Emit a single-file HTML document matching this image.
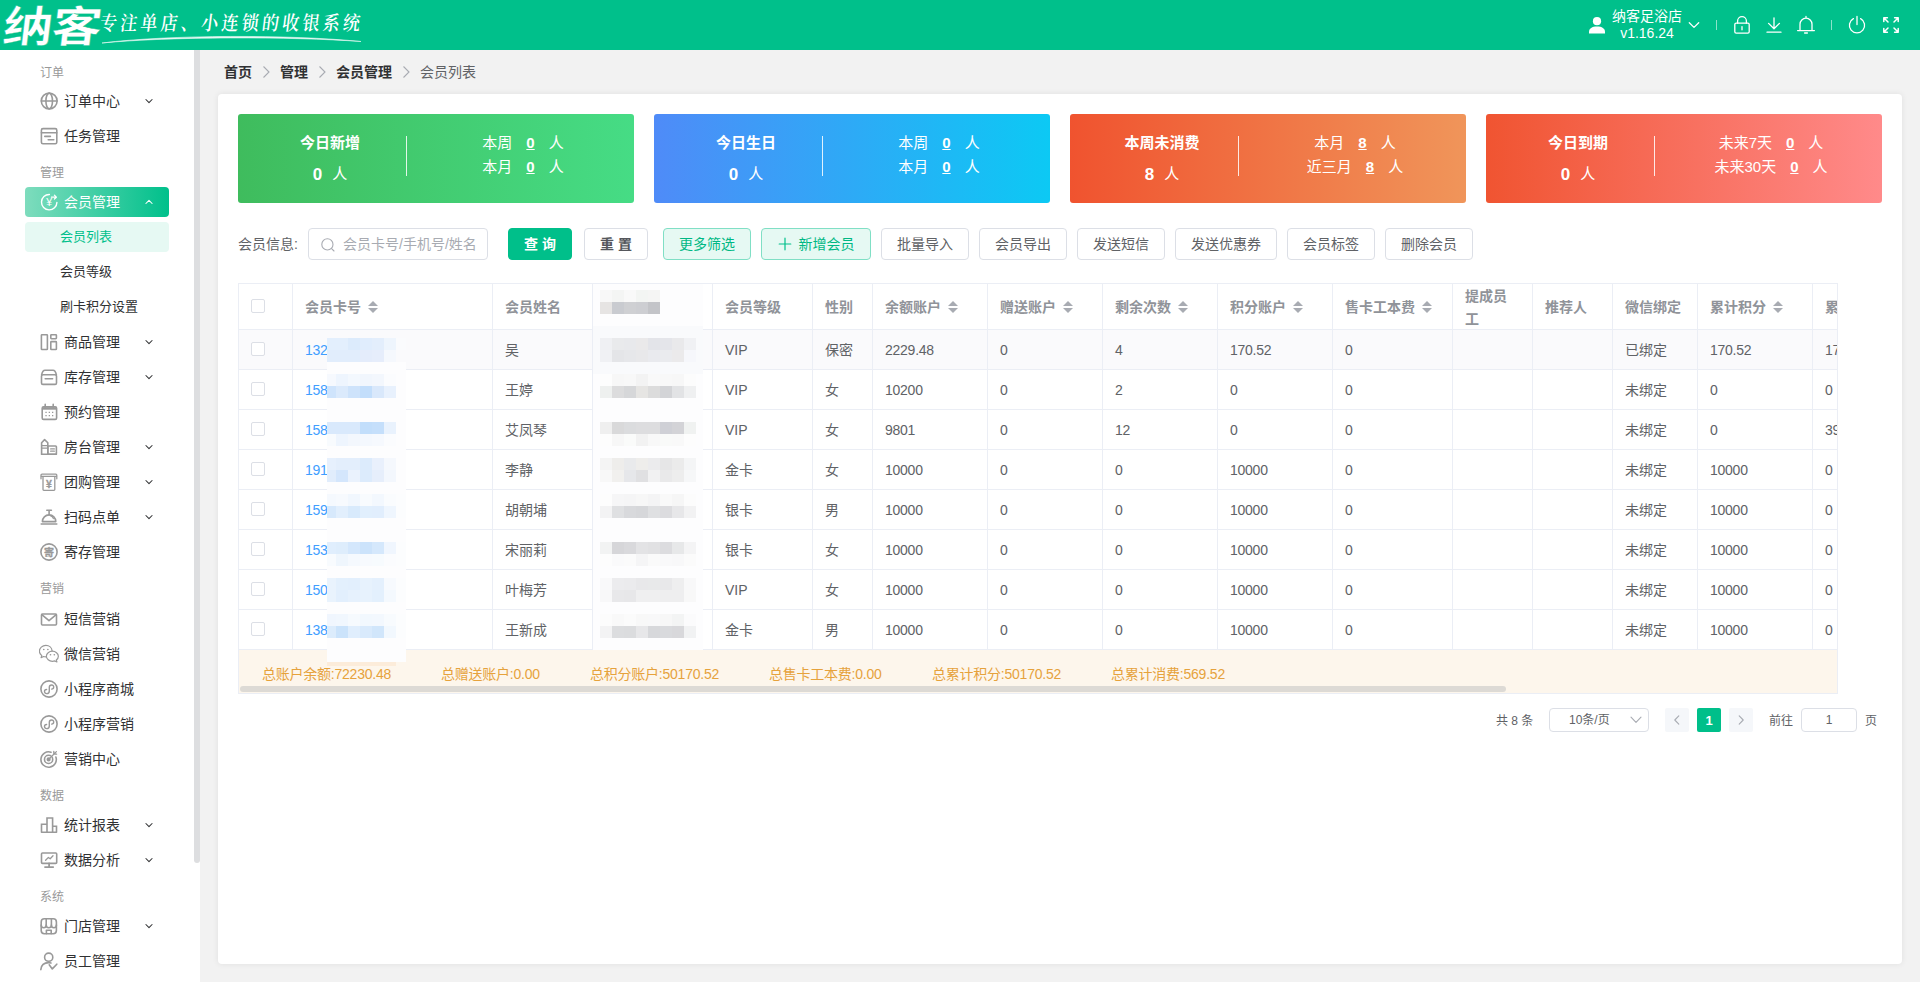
<!DOCTYPE html>
<html lang="zh-CN">
<head>
<meta charset="utf-8">
<title>会员列表</title>
<style>
*{box-sizing:border-box;margin:0;padding:0}
html,body{width:1920px;height:982px;overflow:hidden;background:#f2f2f2}
body{font-family:"Liberation Sans","Noto Sans CJK SC",sans-serif;font-size:14px;color:#303133;position:relative}
.abs{position:absolute}
/* header */
#hd{position:absolute;left:0;top:0;width:1920px;height:50px;background:#00c08b;color:#fff}
#logo{position:absolute;left:0px;top:-1px;font-size:43px;font-weight:700;font-family:"Liberation Sans","Noto Sans CJK SC",sans-serif;letter-spacing:-1px;line-height:56px;transform:scaleX(1.16) skewX(-6deg);transform-origin:left bottom;white-space:nowrap;-webkit-text-stroke:.4px #00c08b}
#slogan{position:absolute;left:100px;top:11.5px;font-size:17px;line-height:24px;font-family:"Liberation Serif","Noto Serif CJK SC",serif;font-weight:600;letter-spacing:3.25px;white-space:nowrap;transform:scaleY(1.16) skewX(-8deg);transform-origin:left center}
svg.hi{fill:none;stroke:#fff;stroke-width:1.3;stroke-linecap:round;stroke-linejoin:round}
/* sidebar */
#sb{position:absolute;left:0;top:50px;width:200px;height:932px;background:#fff;overflow:hidden}
#sb .thumb{position:absolute;left:194px;top:0;width:6px;height:813px;background:#dddee0;border-radius:0 0 3px 3px}
#sb .track{display:none}
.gl{position:absolute;left:40px;font-size:12px;color:#999;line-height:16px;height:16px;margin-top:1px}
.mi{position:absolute;left:25px;width:144px;height:30px;line-height:30px;font-size:14px;color:#303133;border-radius:4px;white-space:nowrap}
.mi .tx{position:absolute;left:39px;top:0}
.mi svg.ic{position:absolute;left:14px;top:5px;width:20px;height:20px;fill:none;stroke:#999;stroke-width:1.6;stroke-linecap:round;stroke-linejoin:round}
.mi svg.ch{position:absolute;left:119px;top:10px;width:10px;height:10px;fill:none;stroke:#303133;stroke-width:1.05;stroke-linecap:round;stroke-linejoin:round}
.mi.act{background:linear-gradient(90deg,#7edcbd 0%,#00c08b 100%);color:#fff}
.mi.act svg.ic,.mi.act svg.ch{stroke:#fff}
.sm{position:absolute;left:25px;width:144px;height:30px;line-height:30px;font-size:13px;color:#303133;border-radius:4px;padding-left:35px;white-space:nowrap}
.sm.on{background:#e6f9f3;color:#00c08b}
/* main */
#bc{position:absolute;left:224px;top:62px;height:20px;line-height:20px;font-size:14px;white-space:nowrap}
#bc b{font-weight:700;color:#303133}
#bc span.l{color:#606266}
#bc svg{display:inline-block;vertical-align:-2px;margin:0 8px 0 8px;width:12px;height:14px;fill:none;stroke:#a8abb2;stroke-width:1.1}
#card{position:absolute;left:218px;top:94px;width:1684px;height:870px;background:#fff;border-radius:4px;box-shadow:0 0 6px rgba(0,0,0,.08)}

/* stat cards */
.st{position:absolute;top:20px;width:396px;height:88.75px;border-radius:3px;color:#fff;font-size:15px}
.g1{background:linear-gradient(90deg,#3fbc5d 0%,#46dc85 100%)}
.g2{background:linear-gradient(90deg,#4f8bf8 0%,#0cc9f4 100%)}
.g3{background:linear-gradient(90deg,#f0532f 0%,#f0955a 100%)}
.g4{background:linear-gradient(90deg,#f05431 0%,#ff8a8a 100%)}
.st .sl{position:absolute;left:0;top:0;width:184px;text-align:center}
.st .t{position:absolute;left:0;width:184px;top:18px;line-height:22px;font-weight:700;font-size:15px}
.st .n{position:absolute;left:0;width:184px;top:48px;line-height:24px;font-size:15px;white-space:nowrap}
.st .n b{font-size:17px;font-weight:700;margin-right:10px;vertical-align:-0.5px}
.st .dv{position:absolute;left:168px;top:22px;width:1px;height:40px;background:rgba(255,255,255,.85)}
.st .srs{position:absolute;left:135px;width:300px;top:17px;text-align:center}
.st .sr{line-height:24px;height:24px;white-space:nowrap}
.st .sr u{font-weight:700;margin:0 14px;text-decoration:underline;text-underline-offset:1px}
/* filter */
.flabel{position:absolute;left:20px;top:134px;height:32px;line-height:32px;font-size:14px;color:#606266;white-space:nowrap}
.finput{position:absolute;left:90px;top:134px;width:180px;height:32px;border:1px solid #dcdfe6;border-radius:4px;background:#fff;line-height:30px;font-size:14px;color:#a8abb2;white-space:nowrap}
.finput svg{position:absolute;left:11px;top:8px;width:16px;height:16px;fill:none;stroke:#a8abb2;stroke-width:1.1;stroke-linecap:round}
.finput span{position:absolute;left:34px;top:0}
.btn{position:absolute;top:134px;height:32px;line-height:30px;border:1px solid #dcdfe6;border-radius:4px;background:#fff;text-align:center;font-size:14px;color:#606266;white-space:nowrap}
.btn.b{font-weight:700;color:#55575c}
.btn.pri{background:#00bf8a;border-color:#00bf8a;color:#fff;font-weight:700}
.btn.pl{background:#e6f9f3;border-color:#80dfc5;color:#00b884}
.btn svg{display:inline-block;width:14px;height:14px;vertical-align:-2px;margin-right:7px;fill:none;stroke:#00c08b;stroke-width:1.2;stroke-linecap:round}
/* table */
#tb{position:absolute;left:20px;top:189px;width:1600px;height:411px;overflow:hidden;border-top:1px solid #ebeef5;border-left:1px solid #ebeef5;border-bottom:1px solid #ebeef5;border-right:1px solid #ebeef5}
#tb table{position:absolute;left:-1px;top:-1px;border-collapse:separate;border-spacing:0;table-layout:fixed;width:1690px}
#tb th,#tb td{border-right:1px solid #ebeef5;border-bottom:1px solid #ebeef5;padding:0;text-align:left;vertical-align:middle;font-size:14px;overflow:hidden}
#tb th{height:47px;border-top:1px solid #ebeef5;color:#909399;font-weight:700;background:#fff}
#tb td{height:40px;color:#606266;background:#fff}
#tb tr.hov td{background:#fafafc}
#tb .cell{padding:0 12px;line-height:23px;white-space:normal;word-break:break-all}
#tb td .cell{white-space:nowrap;position:relative;top:1px}
#tb th .cell{margin:-1px 0;position:relative;top:1px}
#tb .lk{color:#409eff}
#tb .nm{letter-spacing:-.25px}
#tb .c0{padding-left:13px}
.cb{display:inline-block;width:14px;height:14px;border:1px solid #dcdfe6;border-radius:2px;background:#fff;vertical-align:middle;position:relative;top:-2px}
.so{display:inline-block;position:relative;width:24px;height:14px;vertical-align:middle;top:0}
.so i{position:absolute;left:7px;width:0;height:0;border:5px solid transparent}
.so .up{border-bottom-color:#a8abb2;top:-5px}
.so .dn{border-top-color:#a8abb2;bottom:-3px}
#ft{position:absolute;left:-1px;top:366px;width:1601px;height:43px;background:#fdf6ec;color:#e6a23c;font-size:14px}
#ft span{position:absolute;top:14px;line-height:20px;white-space:nowrap;letter-spacing:-.23px}
#ft .hs{position:absolute;left:2px;top:36px;width:1266px;height:6px;border-radius:3px;background:#dddad5}
/* pagination */
.pg{position:absolute;top:614px;height:24px;line-height:27px;font-size:12px;color:#606266;white-space:nowrap}
.pgsel{position:absolute;left:1331px;top:614px;width:100px;height:24px;border:1px solid #dcdfe6;border-radius:4px;font-size:12px;color:#606266;line-height:22px}
.pgsel span{position:absolute;left:19px;top:0}
.pgsel svg{position:absolute;left:80px;top:7px;width:12px;height:8px;fill:none;stroke:#a8abb2;stroke-width:1.1;stroke-linecap:round;stroke-linejoin:round}
svg.mz{z-index:3}
.pgb{position:absolute;top:614px;width:24px;height:24px;border-radius:2px;background:#f5f7fa;text-align:center;line-height:24px;font-size:13px}
.pgb svg{width:10px;height:12px;fill:none;stroke:#a8abb2;stroke-width:1.1;stroke-linecap:round;stroke-linejoin:round;margin-top:6px}
.pgb.on{background:#00bf8a;color:#fff;font-weight:700;line-height:26px}
.pgin{position:absolute;left:1583px;top:614px;width:56px;height:24px;border:1px solid #dcdfe6;border-radius:4px;text-align:center;line-height:22px;font-size:12px;color:#606266}
</style>
</head>
<body>
<div id="hd">
  <div id="logo">纳客</div>
  <div id="slogan">专注单店、小连锁的收银系统</div>
  <svg class="abs" style="left:100px;top:33px" width="264" height="12" viewBox="0 0 264 12"><path d="M2 10 C70 1.5 190 1.5 261 8.5 C190 3.5 70 3.5 2 10Z" fill="#fff" stroke="#fff" stroke-width=".6" opacity=".9"/></svg>
  <svg class="abs" style="left:1588px;top:16px" width="18" height="18" viewBox="0 0 18 18"><circle cx="9" cy="5.2" r="4.1" fill="#fff"/><path d="M1 17.6 V16 C1 12.6 4 10.6 9 10.6 C14 10.6 17 12.6 17 16 V17.6 Z" fill="#fff"/></svg>
  <div class="abs" style="left:1597px;top:7px;width:100px;text-align:center;font-size:14px;line-height:18px;white-space:nowrap">纳客足浴店</div>
  <div class="abs" style="left:1597px;top:24px;width:100px;text-align:center;font-size:14px;line-height:18px;white-space:nowrap">v1.16.24</div>
  <svg class="abs hi" style="left:1688px;top:20px" width="12" height="10" viewBox="0 0 12 10"><path d="M1.3 2.8 L6 7.4 L10.7 2.8"/></svg>
  <div class="abs" style="left:1716px;top:20px;width:1px;height:10px;background:rgba(255,255,255,.55)"></div>
  <svg class="abs hi" style="left:1732px;top:15px" width="20" height="20" viewBox="0 0 20 20"><rect x="2.8" y="8.2" width="14.4" height="10" rx="1.4"/><path d="M5.6 8.2 V6 a4.4 4.4 0 0 1 8.8 0 V8.2 M10 11.6 V14.8" /></svg>
  <svg class="abs hi" style="left:1764px;top:15px" width="20" height="20" viewBox="0 0 20 20"><path d="M10 2.8 V13.4 M4.6 8.4 L10 13.8 L15.4 8.4 M3 17.2 H17"/></svg>
  <svg class="abs hi" style="left:1796px;top:15px" width="20" height="20" viewBox="0 0 20 20"><path d="M4 15.6 V9.2 a6 6 0 0 1 12 0 V15.6 M1.6 15.6 H18.4 M10 3.2 V1.4 M8.6 18 H11.4"/></svg>
  <div class="abs" style="left:1831px;top:20px;width:1px;height:10px;background:rgba(255,255,255,.55)"></div>
  <svg class="abs hi" style="left:1847px;top:15px" width="20" height="20" viewBox="0 0 20 20"><path d="M10 1.4 V9.6 M6.4 3.6 A7.6 7.6 0 1 0 13.6 3.6"/></svg>
  <svg class="abs hi" style="left:1881px;top:15px" width="20" height="20" viewBox="0 0 20 20"><path d="M2.8 6.4 V2.8 H6.4 M3 3 L7 7 M13.6 2.8 H17.2 V6.4 M17 3 L13 7 M2.8 13.6 V17.2 H6.4 M3 17 L7 13 M17.2 13.6 V17.2 H13.6 M17 17 L13 13" stroke-width="1.5"/></svg>
</div>
<div id="sb">
  <div class="track"></div><div class="thumb"></div>
  <!--SB0-->
  <div class="gl" style="top:14px">订单</div>
  <div class="mi" style="top:36px"><svg class="ic" viewBox="0 0 20 20"><circle cx="10.2" cy="10" r="7.9"/><ellipse cx="10.2" cy="10" rx="3.3" ry="7.9"/><path d="M2.3 10 H18.1"/></svg><span class="tx">订单中心</span><svg class="ch" viewBox="0 0 10 10"><path d="M1.9 3.5 L5 6.6 L8.1 3.5"/></svg></div>
  <div class="mi" style="top:71px"><svg class="ic" viewBox="0 0 20 20"><rect x="2.4" y="2.6" width="15.4" height="15.2" rx="1.6"/><path d="M2.4 6.8 H17.8 M5.8 10.4 H11.4 M9.2 13.8 H14.8"/></svg><span class="tx">任务管理</span></div>
  <div class="gl" style="top:114px">管理</div>
  <div class="mi act" style="top:137px"><svg class="ic" viewBox="0 0 20 20"><path d="M10.4 2.5 A7.7 7.7 0 1 0 17.9 10.4" stroke-width="1.4"/><path d="M12.4 5.2 H17.2 M15.4 3.2 L17.4 5.2 L15.4 7" stroke-width="1.2"/><text x="10.1" y="14" font-size="10.5" text-anchor="middle" stroke="none" fill="#fff" font-family="Liberation Sans,sans-serif">¥</text></svg><span class="tx">会员管理</span><svg class="ch" viewBox="0 0 10 10"><path d="M1.9 6.5 L5 3.4 L8.1 6.5"/></svg></div>
  <div class="sm on" style="top:172px">会员列表</div>
  <div class="sm" style="top:207px">会员等级</div>
  <div class="sm" style="top:242px">刷卡积分设置</div>
  <div class="mi" style="top:277px"><svg class="ic" viewBox="0 0 20 20"><rect x="2.4" y="2.7" width="6" height="14.8" rx=".6"/><rect x="11.8" y="2.7" width="5.6" height="4" rx=".6"/><rect x="11.8" y="9.6" width="5.6" height="7.9" rx=".6"/></svg><span class="tx">商品管理</span><svg class="ch" viewBox="0 0 10 10"><path d="M1.9 3.5 L5 6.6 L8.1 3.5"/></svg></div>
  <div class="mi" style="top:312px"><svg class="ic" viewBox="0 0 20 20"><path d="M2.6 8 C3.2 5 4.4 3.2 6 3.2 H14 C15.6 3.2 16.8 5 17.4 8"/><rect x="2.5" y="7.8" width="15" height="9.6" rx="1.4"/><path d="M6.2 11.8 H13.6"/></svg><span class="tx">库存管理</span><svg class="ch" viewBox="0 0 10 10"><path d="M1.9 3.5 L5 6.6 L8.1 3.5"/></svg></div>
  <div class="mi" style="top:347px"><svg class="ic" viewBox="0 0 20 20"><rect x="3.2" y="4.8" width="14.4" height="12.6" rx="1.4"/><path d="M6.2 2.4 V5 M14.2 2.4 V5"/><path d="M3.4 6.4 H17.4" stroke-width="2.6" stroke-linecap="butt"/><path d="M6.4 9.8 h1.3 v1.3 h-1.3z M9.7 9.8 h1.3 v1.3 h-1.3z M13 9.8 h1.3 v1.3 h-1.3z M6.4 13 h1.3 v1.3 h-1.3z M9.7 13 h1.3 v1.3 h-1.3z M13 13 h1.3 v1.3 h-1.3z" fill="#999" stroke="none"/></svg><span class="tx">预约管理</span></div>
  <div class="mi" style="top:382px"><svg class="ic" viewBox="0 0 20 20"><path d="M2.6 17.2 V5.8 L5.6 2.6 L8.8 5.8 V17.2"/><path d="M2.6 8.6 H8.8 M2.6 11.2 H8.8" stroke-width="1.2"/><rect x="8.8" y="9" width="8.6" height="8.2" rx=".8"/><path d="M2.6 17.2 H17.4"/><path d="M11.6 11.9 H15.4 M11.6 14.2 H15.4" stroke-width="1.2"/></svg><span class="tx">房台管理</span><svg class="ch" viewBox="0 0 10 10"><path d="M1.9 3.5 L5 6.6 L8.1 3.5"/></svg></div>
  <div class="mi" style="top:417px"><svg class="ic" viewBox="0 0 20 20"><path d="M2 6.8 V3.2 a1 1 0 0 1 1-1 H16.8 a1 1 0 0 1 1 1 V6.8" stroke-width="1.3"/><path d="M2.4 4.4 H17.4" stroke-width="1.3"/><path d="M4 4.6 V17.6 a.8 .8 0 0 0 .8 .8 H15 a.8 .8 0 0 0 .8-.8 V4.6" stroke-width="1.3"/><text x="9.9" y="15.6" font-size="10.5" font-weight="700" text-anchor="middle" stroke="#999" stroke-width=".3" fill="#999" font-family="Liberation Sans,sans-serif">¥</text></svg><span class="tx">团购管理</span><svg class="ch" viewBox="0 0 10 10"><path d="M1.9 3.5 L5 6.6 L8.1 3.5"/></svg></div>
  <div class="mi" style="top:452px"><svg class="ic" viewBox="0 0 20 20"><path d="M3.4 14.6 a6.7 6.7 0 0 1 13.4 0 Z"/><path d="M2.2 17 H17.8 M10.1 7.8 V3.6 M7.8 3.2 H12.4"/><path d="M11.4 8.6 a4.6 4.6 0 0 1 3 3" stroke-width="1.2"/></svg><span class="tx">扫码点单</span><svg class="ch" viewBox="0 0 10 10"><path d="M1.9 3.5 L5 6.6 L8.1 3.5"/></svg></div>
  <div class="mi" style="top:487px"><svg class="ic" viewBox="0 0 20 20"><circle cx="10" cy="10" r="8.1"/><text x="10" y="13.7" font-size="10" font-weight="700" text-anchor="middle" stroke="#999" stroke-width=".35" fill="#999" font-family="Liberation Sans,Noto Sans CJK SC,sans-serif">寄</text></svg><span class="tx">寄存管理</span></div>
  <div class="gl" style="top:530px">营销</div>
  <div class="mi" style="top:554px"><svg class="ic" viewBox="0 0 20 20"><rect x="2.5" y="5" width="15" height="11" rx="1"/><path d="M2.8 5.6 L10 11.6 L17.2 5.6"/></svg><span class="tx">短信营销</span></div>
  <div class="mi" style="top:589px"><svg class="ic" viewBox="0 0 20 20"><g transform="translate(10 9.6) scale(1.2) translate(-10 -9.8)" stroke-width="1"><path d="M12.6 7.6 C12.4 5 10.2 3 7.4 3 C4.4 3 2 5.1 2 7.8 C2 9.3 2.8 10.6 4 11.5 L3.4 13.2 L5.5 12.2 C6.1 12.4 6.7 12.5 7.4 12.5"/><path d="M12.8 7.8 C15.4 7.8 17.8 9.7 17.8 12 C17.8 13.3 17.1 14.4 16.1 15.2 L16.6 16.8 L14.8 15.9 C14.2 16.1 13.5 16.2 12.8 16.2 C10.2 16.2 7.8 14.3 7.8 12 C7.8 9.7 10.2 7.8 12.8 7.8 Z"/><path d="M5.6 6.4 h.1 M9 6.4 h.1 M11.2 10.8 h.1 M14.4 10.8 h.1" stroke-width="1.3"/></g></svg><span class="tx">微信营销</span></div>
  <div class="mi" style="top:624px"><svg class="ic" viewBox="0 0 20 20"><circle cx="10" cy="10" r="8.1"/><path d="M12.6 10.1 C13.9 10.1 14.7 9.2 14.7 8.1 C14.7 6.9 13.8 6 12.6 6 C11.3 6 10.3 6.9 10.3 8.3 V11.9 C10.3 13.3 9.2 14.6 7.6 14.6 C6.4 14.6 5.5 13.7 5.5 12.5 C5.5 11.4 6.3 10.5 7.6 10.5" stroke-width="1.4"/></svg><span class="tx">小程序商城</span></div>
  <div class="mi" style="top:659px"><svg class="ic" viewBox="0 0 20 20"><circle cx="10" cy="10" r="8.1"/><path d="M12.6 10.1 C13.9 10.1 14.7 9.2 14.7 8.1 C14.7 6.9 13.8 6 12.6 6 C11.3 6 10.3 6.9 10.3 8.3 V11.9 C10.3 13.3 9.2 14.6 7.6 14.6 C6.4 14.6 5.5 13.7 5.5 12.5 C5.5 11.4 6.3 10.5 7.6 10.5" stroke-width="1.4"/></svg><span class="tx">小程序营销</span></div>
  <div class="mi" style="top:694px"><svg class="ic" viewBox="0 0 20 20"><path d="M16.9 8 A7.7 7.7 0 1 1 12 3.2"/><circle cx="9.6" cy="10.4" r="4.1"/><circle cx="9.6" cy="10.4" r="1.3" fill="#999"/><path d="M9.8 10.2 L17.4 2.6 M14.8 2.4 V5.2 H17.6" stroke-width="1.3"/></svg><span class="tx">营销中心</span></div>
  <div class="gl" style="top:737px">数据</div>
  <div class="mi" style="top:760px"><svg class="ic" viewBox="0 0 20 20"><path d="M2.5 17.3 V9.2 H8 M8 17.3 V3 H13.6 V17.3 M13.6 11.2 H17.5 V17.3 M2.5 17.3 H17.5" stroke-linejoin="miter"/></svg><span class="tx">统计报表</span><svg class="ch" viewBox="0 0 10 10"><path d="M1.9 3.5 L5 6.6 L8.1 3.5"/></svg></div>
  <div class="mi" style="top:795px"><svg class="ic" viewBox="0 0 20 20"><rect x="2.5" y="3" width="15.2" height="10.4" rx="1"/><path d="M10.1 13.4 V17 M6 17.1 H14.2" stroke-width="1.8"/><path d="M6.6 10.2 L9.4 7.4 L11.2 8.8 L14 5.8" stroke-width="1.3"/></svg><span class="tx">数据分析</span><svg class="ch" viewBox="0 0 10 10"><path d="M1.9 3.5 L5 6.6 L8.1 3.5"/></svg></div>
  <div class="gl" style="top:838px">系统</div>
  <div class="mi" style="top:861px"><svg class="ic" viewBox="0 0 20 20"><rect x="2.2" y="2.7" width="15.2" height="15" rx="3.2"/><path d="M7.2 2.7 V9.2 M12.4 2.7 V9.2"/><path d="M2.2 9 a2.5 2.8 0 0 0 5 0 a2.6 2.8 0 0 0 5.2 0 a2.5 2.8 0 0 0 5 0"/><path d="M7.4 17.6 V14.2 H12.2 V17.6"/></svg><span class="tx">门店管理</span><svg class="ch" viewBox="0 0 10 10"><path d="M1.9 3.5 L5 6.6 L8.1 3.5"/></svg></div>
  <div class="mi" style="top:896px"><svg class="ic" viewBox="0 0 20 20"><circle cx="9.7" cy="6.2" r="4.1"/><path d="M1.8 18.6 C2.2 14.6 5 11.6 9.7 11.6 C10.6 11.6 11.4 11.7 12 11.9 M10.2 13.8 L13.3 17.9 L17.8 13.2"/></svg><span class="tx">员工管理</span></div>
  <!--SB1-->
</div>
<div id="bc"><b>首页</b><svg viewBox="0 0 12 14"><path d="M3.5 1.5 L9 7 L3.5 12.5"/></svg><b>管理</b><svg viewBox="0 0 12 14"><path d="M3.5 1.5 L9 7 L3.5 12.5"/></svg><b>会员管理</b><svg viewBox="0 0 12 14"><path d="M3.5 1.5 L9 7 L3.5 12.5"/></svg><span class="l">会员列表</span></div>
<div id="card">
  <!--C0-->
  <div class="st g1" style="left:20px"><div class="sl"><div class="t">今日新增</div><div class="n"><b>0</b>人</div></div><i class="dv"></i><div class="srs"><div class="sr">本周<u>0</u>人</div><div class="sr">本月<u>0</u>人</div></div></div>
  <div class="st g2" style="left:436px"><div class="sl"><div class="t">今日生日</div><div class="n"><b>0</b>人</div></div><i class="dv"></i><div class="srs"><div class="sr">本周<u>0</u>人</div><div class="sr">本月<u>0</u>人</div></div></div>
  <div class="st g3" style="left:852px"><div class="sl"><div class="t">本周未消费</div><div class="n"><b>8</b>人</div></div><i class="dv"></i><div class="srs"><div class="sr">本月<u>8</u>人</div><div class="sr">近三月<u>8</u>人</div></div></div>
  <div class="st g4" style="left:1268px"><div class="sl"><div class="t">今日到期</div><div class="n"><b>0</b>人</div></div><i class="dv"></i><div class="srs"><div class="sr">未来7天<u>0</u>人</div><div class="sr">未来30天<u>0</u>人</div></div></div>
  <div class="flabel">会员信息:</div>
  <div class="finput"><svg viewBox="0 0 16 16"><circle cx="7.4" cy="7.4" r="5.6"/><path d="M11.6 11.6 L14 14"/></svg><span>会员卡号/手机号/姓名</span></div>
  <div class="btn pri" style="left:290px;width:64px">查 询</div>
  <div class="btn def b" style="left:366px;width:64px">重 置</div>
  <div class="btn pl" style="left:445px;width:88px">更多筛选</div>
  <div class="btn pl" style="left:543px;width:110px"><svg viewBox="0 0 14 14"><path d="M7 1.2 V12.8 M1.2 7 H12.8"/></svg>新增会员</div>
  <div class="btn def" style="left:663px;width:88px">批量导入</div>
  <div class="btn def" style="left:761px;width:88px">会员导出</div>
  <div class="btn def" style="left:859px;width:88px">发送短信</div>
  <div class="btn def" style="left:957px;width:102px">发送优惠券</div>
  <div class="btn def" style="left:1069px;width:88px">会员标签</div>
  <div class="btn def" style="left:1167px;width:88px">删除会员</div>
  <div id="tb"><table><colgroup><col style="width:55px"><col style="width:200px"><col style="width:100px"><col style="width:120px"><col style="width:100px"><col style="width:60px"><col style="width:115px"><col style="width:115px"><col style="width:115px"><col style="width:115px"><col style="width:120px"><col style="width:80px"><col style="width:80px"><col style="width:85px"><col style="width:115px"><col style="width:115px"></colgroup><thead><tr><th class="c0"><span class="cb"></span></th><th><div class="cell">会员卡号<span class="so"><i class="up"></i><i class="dn"></i></span></div></th><th><div class="cell">会员姓名</div></th><th><div class="cell"></div></th><th><div class="cell">会员等级</div></th><th><div class="cell">性别</div></th><th><div class="cell">余额账户<span class="so"><i class="up"></i><i class="dn"></i></span></div></th><th><div class="cell">赠送账户<span class="so"><i class="up"></i><i class="dn"></i></span></div></th><th><div class="cell">剩余次数<span class="so"><i class="up"></i><i class="dn"></i></span></div></th><th><div class="cell">积分账户<span class="so"><i class="up"></i><i class="dn"></i></span></div></th><th><div class="cell">售卡工本费<span class="so"><i class="up"></i><i class="dn"></i></span></div></th><th><div class="cell">提成员工</div></th><th><div class="cell">推荐人</div></th><th><div class="cell">微信绑定</div></th><th><div class="cell">累计积分<span class="so"><i class="up"></i><i class="dn"></i></span></div></th><th><div class="cell">累计消费<span class="so"><i class="up"></i><i class="dn"></i></span></div></th></tr></thead><tbody><tr class="hov"><td class="c0"><span class="cb"></span></td><td><div class="cell lk nm">132</div></td><td><div class="cell">吴</div></td><td></td><td><div class="cell">VIP</div></td><td><div class="cell">保密</div></td><td><div class="cell nm">2229.48</div></td><td><div class="cell nm">0</div></td><td><div class="cell nm">4</div></td><td><div class="cell nm">170.52</div></td><td><div class="cell nm">0</div></td><td><div class="cell"></div></td><td><div class="cell"></div></td><td><div class="cell">已绑定</div></td><td><div class="cell nm">170.52</div></td><td><div class="cell nm">17</div></td></tr><tr><td class="c0"><span class="cb"></span></td><td><div class="cell lk nm">158</div></td><td><div class="cell">王婷</div></td><td></td><td><div class="cell">VIP</div></td><td><div class="cell">女</div></td><td><div class="cell nm">10200</div></td><td><div class="cell nm">0</div></td><td><div class="cell nm">2</div></td><td><div class="cell nm">0</div></td><td><div class="cell nm">0</div></td><td><div class="cell"></div></td><td><div class="cell"></div></td><td><div class="cell">未绑定</div></td><td><div class="cell nm">0</div></td><td><div class="cell nm">0</div></td></tr><tr><td class="c0"><span class="cb"></span></td><td><div class="cell lk nm">158</div></td><td><div class="cell">艾凤琴</div></td><td></td><td><div class="cell">VIP</div></td><td><div class="cell">女</div></td><td><div class="cell nm">9801</div></td><td><div class="cell nm">0</div></td><td><div class="cell nm">12</div></td><td><div class="cell nm">0</div></td><td><div class="cell nm">0</div></td><td><div class="cell"></div></td><td><div class="cell"></div></td><td><div class="cell">未绑定</div></td><td><div class="cell nm">0</div></td><td><div class="cell nm">39</div></td></tr><tr><td class="c0"><span class="cb"></span></td><td><div class="cell lk nm">191</div></td><td><div class="cell">李静</div></td><td></td><td><div class="cell">金卡</div></td><td><div class="cell">女</div></td><td><div class="cell nm">10000</div></td><td><div class="cell nm">0</div></td><td><div class="cell nm">0</div></td><td><div class="cell nm">10000</div></td><td><div class="cell nm">0</div></td><td><div class="cell"></div></td><td><div class="cell"></div></td><td><div class="cell">未绑定</div></td><td><div class="cell nm">10000</div></td><td><div class="cell nm">0</div></td></tr><tr><td class="c0"><span class="cb"></span></td><td><div class="cell lk nm">159</div></td><td><div class="cell">胡朝埔</div></td><td></td><td><div class="cell">银卡</div></td><td><div class="cell">男</div></td><td><div class="cell nm">10000</div></td><td><div class="cell nm">0</div></td><td><div class="cell nm">0</div></td><td><div class="cell nm">10000</div></td><td><div class="cell nm">0</div></td><td><div class="cell"></div></td><td><div class="cell"></div></td><td><div class="cell">未绑定</div></td><td><div class="cell nm">10000</div></td><td><div class="cell nm">0</div></td></tr><tr><td class="c0"><span class="cb"></span></td><td><div class="cell lk nm">153</div></td><td><div class="cell">宋丽莉</div></td><td></td><td><div class="cell">银卡</div></td><td><div class="cell">女</div></td><td><div class="cell nm">10000</div></td><td><div class="cell nm">0</div></td><td><div class="cell nm">0</div></td><td><div class="cell nm">10000</div></td><td><div class="cell nm">0</div></td><td><div class="cell"></div></td><td><div class="cell"></div></td><td><div class="cell">未绑定</div></td><td><div class="cell nm">10000</div></td><td><div class="cell nm">0</div></td></tr><tr><td class="c0"><span class="cb"></span></td><td><div class="cell lk nm">150</div></td><td><div class="cell">叶梅芳</div></td><td></td><td><div class="cell">VIP</div></td><td><div class="cell">女</div></td><td><div class="cell nm">10000</div></td><td><div class="cell nm">0</div></td><td><div class="cell nm">0</div></td><td><div class="cell nm">10000</div></td><td><div class="cell nm">0</div></td><td><div class="cell"></div></td><td><div class="cell"></div></td><td><div class="cell">未绑定</div></td><td><div class="cell nm">10000</div></td><td><div class="cell nm">0</div></td></tr><tr><td class="c0"><span class="cb"></span></td><td><div class="cell lk nm">138</div></td><td><div class="cell">王新成</div></td><td></td><td><div class="cell">金卡</div></td><td><div class="cell">男</div></td><td><div class="cell nm">10000</div></td><td><div class="cell nm">0</div></td><td><div class="cell nm">0</div></td><td><div class="cell nm">10000</div></td><td><div class="cell nm">0</div></td><td><div class="cell"></div></td><td><div class="cell"></div></td><td><div class="cell">未绑定</div></td><td><div class="cell nm">10000</div></td><td><div class="cell nm">0</div></td></tr></tbody></table><!--M0--><svg class="mz" width="1600" height="408" viewBox="0 0 1600 408" shape-rendering="crispEdges" style="position:absolute;left:-1px;top:0;overflow:visible"><rect x="89" y="54" width="79" height="324" fill="#fdfdfe"/><rect x="355" y="-6" width="110" height="372" fill="#fdfdfe"/><rect x="355" y="42" width="110" height="48" fill="#f9fafc"/><rect x="89" y="54" width="9" height="12" fill="#e3effd"/><rect x="98" y="54" width="12" height="12" fill="#e3effd"/><rect x="110" y="54" width="12" height="12" fill="#dcebfc"/><rect x="122" y="54" width="12" height="12" fill="#e0edfd"/><rect x="134" y="54" width="12" height="12" fill="#e3eefc"/><rect x="146" y="54" width="12" height="12" fill="#eef5fd"/><rect x="158" y="54" width="10" height="12" fill="#fafbfd"/><rect x="89" y="66" width="9" height="12" fill="#e1edfc"/><rect x="98" y="66" width="12" height="12" fill="#e1edfc"/><rect x="110" y="66" width="12" height="12" fill="#e1edfc"/><rect x="122" y="66" width="12" height="12" fill="#e4ecfb"/><rect x="134" y="66" width="12" height="12" fill="#e6edfb"/><rect x="146" y="66" width="12" height="12" fill="#f5f8fd"/><rect x="158" y="66" width="10" height="12" fill="#fafafc"/><rect x="89" y="90" width="9" height="12" fill="#f6f9fe"/><rect x="98" y="90" width="12" height="12" fill="#eef5fe"/><rect x="110" y="90" width="12" height="12" fill="#f3f8fe"/><rect x="122" y="90" width="12" height="12" fill="#f1f6fd"/><rect x="134" y="90" width="12" height="12" fill="#f3f7fd"/><rect x="146" y="90" width="12" height="12" fill="#fbfcfe"/><rect x="158" y="90" width="10" height="12" fill="#fdfdfe"/><rect x="89" y="102" width="9" height="12" fill="#cfe4fc"/><rect x="98" y="102" width="12" height="12" fill="#dbeafc"/><rect x="110" y="102" width="12" height="12" fill="#cee3fb"/><rect x="122" y="102" width="12" height="12" fill="#c3defb"/><rect x="134" y="102" width="12" height="12" fill="#d9e8fb"/><rect x="146" y="102" width="12" height="12" fill="#e8f1fd"/><rect x="158" y="102" width="10" height="12" fill="#fdfdfe"/><rect x="89" y="138" width="9" height="12" fill="#d9e9fc"/><rect x="98" y="138" width="12" height="12" fill="#d9e9fc"/><rect x="110" y="138" width="12" height="12" fill="#d9e9fc"/><rect x="122" y="138" width="12" height="12" fill="#c2defb"/><rect x="134" y="138" width="12" height="12" fill="#c5dffb"/><rect x="146" y="138" width="12" height="12" fill="#e9f2fd"/><rect x="158" y="138" width="10" height="12" fill="#fdfdfe"/><rect x="89" y="150" width="9" height="12" fill="#f8fbfe"/><rect x="98" y="150" width="12" height="12" fill="#eef5fe"/><rect x="110" y="150" width="12" height="12" fill="#f3f7fd"/><rect x="122" y="150" width="12" height="12" fill="#f4f8fe"/><rect x="134" y="150" width="12" height="12" fill="#f6f9fe"/><rect x="146" y="150" width="12" height="12" fill="#fbfcfe"/><rect x="158" y="150" width="10" height="12" fill="#fdfdfe"/><rect x="89" y="174" width="9" height="12" fill="#e6f0fd"/><rect x="98" y="174" width="12" height="12" fill="#e3eefc"/><rect x="110" y="174" width="12" height="12" fill="#e3eefc"/><rect x="122" y="174" width="12" height="12" fill="#dcebfc"/><rect x="134" y="174" width="12" height="12" fill="#e9f0fc"/><rect x="146" y="174" width="12" height="12" fill="#f5f8fd"/><rect x="158" y="174" width="10" height="12" fill="#fdfdfe"/><rect x="89" y="186" width="9" height="12" fill="#e1edfc"/><rect x="98" y="186" width="12" height="12" fill="#d4e6fc"/><rect x="110" y="186" width="12" height="12" fill="#eaf2fd"/><rect x="122" y="186" width="12" height="12" fill="#dcebfc"/><rect x="134" y="186" width="12" height="12" fill="#e6eefb"/><rect x="146" y="186" width="12" height="12" fill="#f3f7fd"/><rect x="158" y="186" width="10" height="12" fill="#fdfdfe"/><rect x="89" y="210" width="9" height="12" fill="#f5f9fe"/><rect x="98" y="210" width="12" height="12" fill="#f7fafe"/><rect x="110" y="210" width="12" height="12" fill="#f1f7fe"/><rect x="122" y="210" width="12" height="12" fill="#f8fbfe"/><rect x="134" y="210" width="12" height="12" fill="#f3f8fe"/><rect x="146" y="210" width="12" height="12" fill="#fafcfe"/><rect x="158" y="210" width="10" height="12" fill="#fcfdfe"/><rect x="89" y="222" width="9" height="12" fill="#d7e9fc"/><rect x="98" y="222" width="12" height="12" fill="#e2effd"/><rect x="110" y="222" width="12" height="12" fill="#d8eafc"/><rect x="122" y="222" width="12" height="12" fill="#e1effd"/><rect x="134" y="222" width="12" height="12" fill="#e1eefd"/><rect x="146" y="222" width="12" height="12" fill="#eff6fe"/><rect x="158" y="222" width="10" height="12" fill="#fcfdfe"/><rect x="89" y="258" width="9" height="12" fill="#e0eefd"/><rect x="98" y="258" width="12" height="12" fill="#deedfc"/><rect x="110" y="258" width="12" height="12" fill="#d4e7fc"/><rect x="122" y="258" width="12" height="12" fill="#cce3fb"/><rect x="134" y="258" width="12" height="12" fill="#d5e8fc"/><rect x="146" y="258" width="12" height="12" fill="#f0f6fe"/><rect x="158" y="258" width="10" height="12" fill="#fcfdfe"/><rect x="89" y="270" width="9" height="12" fill="#f8fbfe"/><rect x="98" y="270" width="12" height="12" fill="#eff6fd"/><rect x="110" y="270" width="12" height="12" fill="#f5f9fe"/><rect x="122" y="270" width="12" height="12" fill="#f7fafe"/><rect x="134" y="270" width="12" height="12" fill="#f7fbfe"/><rect x="146" y="270" width="12" height="12" fill="#fbfcfe"/><rect x="158" y="270" width="10" height="12" fill="#fcfdfe"/><rect x="89" y="294" width="9" height="12" fill="#e9f3fd"/><rect x="98" y="294" width="12" height="12" fill="#e3f0fd"/><rect x="110" y="294" width="12" height="12" fill="#e2effd"/><rect x="122" y="294" width="12" height="12" fill="#e7f2fd"/><rect x="134" y="294" width="12" height="12" fill="#e4f0fd"/><rect x="146" y="294" width="12" height="12" fill="#f7fafe"/><rect x="158" y="294" width="10" height="12" fill="#fcfdfe"/><rect x="89" y="306" width="9" height="12" fill="#e9f3fd"/><rect x="98" y="306" width="12" height="12" fill="#e2effd"/><rect x="110" y="306" width="12" height="12" fill="#e6f1fd"/><rect x="122" y="306" width="12" height="12" fill="#e7f2fd"/><rect x="134" y="306" width="12" height="12" fill="#e3f0fd"/><rect x="146" y="306" width="12" height="12" fill="#f4f9fe"/><rect x="158" y="306" width="10" height="12" fill="#fcfdfe"/><rect x="89" y="330" width="9" height="12" fill="#f0f6fe"/><rect x="98" y="330" width="12" height="12" fill="#f1f7fe"/><rect x="110" y="330" width="12" height="12" fill="#f6fafe"/><rect x="122" y="330" width="12" height="12" fill="#f2f8fe"/><rect x="134" y="330" width="12" height="12" fill="#f3f8fe"/><rect x="146" y="330" width="12" height="12" fill="#f8fbfe"/><rect x="158" y="330" width="10" height="12" fill="#fcfdfe"/><rect x="89" y="342" width="9" height="12" fill="#dcecfc"/><rect x="98" y="342" width="12" height="12" fill="#cbe3fb"/><rect x="110" y="342" width="12" height="12" fill="#e0eefd"/><rect x="122" y="342" width="12" height="12" fill="#d9eafc"/><rect x="134" y="342" width="12" height="12" fill="#d1e6fb"/><rect x="146" y="342" width="12" height="12" fill="#f2f8fe"/><rect x="158" y="342" width="10" height="12" fill="#fcfdfe"/><rect x="362" y="54" width="12" height="12" fill="#eff0f3"/><rect x="374" y="54" width="12" height="12" fill="#e9eaec"/><rect x="386" y="54" width="12" height="12" fill="#e8e9ec"/><rect x="398" y="54" width="12" height="12" fill="#eae9ea"/><rect x="410" y="54" width="12" height="12" fill="#e3e4e9"/><rect x="422" y="54" width="12" height="12" fill="#e4e5ea"/><rect x="434" y="54" width="12" height="12" fill="#e9e9eb"/><rect x="446" y="54" width="12" height="12" fill="#f0f1f4"/><rect x="362" y="66" width="12" height="12" fill="#f0f1f4"/><rect x="374" y="66" width="12" height="12" fill="#e4e5e8"/><rect x="386" y="66" width="12" height="12" fill="#e6e7ea"/><rect x="398" y="66" width="12" height="12" fill="#e8e8ea"/><rect x="410" y="66" width="12" height="12" fill="#e9eaee"/><rect x="422" y="66" width="12" height="12" fill="#eaebee"/><rect x="434" y="66" width="12" height="12" fill="#ebeaeb"/><rect x="446" y="66" width="12" height="12" fill="#f6f7fb"/><rect x="362" y="90" width="12" height="12" fill="#fdfdfd"/><rect x="374" y="90" width="12" height="12" fill="#f7f7f7"/><rect x="386" y="90" width="12" height="12" fill="#f8f8f8"/><rect x="398" y="90" width="12" height="12" fill="#f3f3f3"/><rect x="410" y="90" width="12" height="12" fill="#f9f9f9"/><rect x="422" y="90" width="12" height="12" fill="#f8f8f8"/><rect x="434" y="90" width="12" height="12" fill="#f7f7f7"/><rect x="446" y="90" width="12" height="12" fill="#fcfcfc"/><rect x="362" y="102" width="12" height="12" fill="#eef0ef"/><rect x="374" y="102" width="12" height="12" fill="#dcdcdd"/><rect x="386" y="102" width="12" height="12" fill="#d6d7d9"/><rect x="398" y="102" width="12" height="12" fill="#e6e5e3"/><rect x="410" y="102" width="12" height="12" fill="#dcdcdc"/><rect x="422" y="102" width="12" height="12" fill="#d3d4d7"/><rect x="434" y="102" width="12" height="12" fill="#e2e3e5"/><rect x="446" y="102" width="12" height="12" fill="#eff0f1"/><rect x="362" y="138" width="12" height="12" fill="#efefef"/><rect x="374" y="138" width="12" height="12" fill="#d9d9da"/><rect x="386" y="138" width="12" height="12" fill="#dbdcde"/><rect x="398" y="138" width="12" height="12" fill="#dddddf"/><rect x="410" y="138" width="12" height="12" fill="#dddddf"/><rect x="422" y="138" width="12" height="12" fill="#cfd0d6"/><rect x="434" y="138" width="12" height="12" fill="#d3d3d7"/><rect x="446" y="138" width="12" height="12" fill="#f0f2f1"/><rect x="362" y="150" width="12" height="12" fill="#fdfdfd"/><rect x="374" y="150" width="12" height="12" fill="#f7f7f7"/><rect x="386" y="150" width="12" height="12" fill="#fafbfa"/><rect x="398" y="150" width="12" height="12" fill="#f2f2f2"/><rect x="410" y="150" width="12" height="12" fill="#f8f8f8"/><rect x="422" y="150" width="12" height="12" fill="#f9faf9"/><rect x="434" y="150" width="12" height="12" fill="#f9f9f9"/><rect x="446" y="150" width="12" height="12" fill="#fdfdfd"/><rect x="362" y="174" width="12" height="12" fill="#f4f4f4"/><rect x="374" y="174" width="12" height="12" fill="#eeedeb"/><rect x="386" y="174" width="12" height="12" fill="#e9eaec"/><rect x="398" y="174" width="12" height="12" fill="#eeedeb"/><rect x="410" y="174" width="12" height="12" fill="#ebebed"/><rect x="422" y="174" width="12" height="12" fill="#e6e6e7"/><rect x="434" y="174" width="12" height="12" fill="#ebebeb"/><rect x="446" y="174" width="12" height="12" fill="#f4f5f6"/><rect x="362" y="186" width="12" height="12" fill="#f8f8f8"/><rect x="374" y="186" width="12" height="12" fill="#f1f0ee"/><rect x="386" y="186" width="12" height="12" fill="#e6e7ea"/><rect x="398" y="186" width="12" height="12" fill="#e0e0e2"/><rect x="410" y="186" width="12" height="12" fill="#f1f1f2"/><rect x="422" y="186" width="12" height="12" fill="#e9e9ea"/><rect x="434" y="186" width="12" height="12" fill="#ededed"/><rect x="446" y="186" width="12" height="12" fill="#f6f7f8"/><rect x="362" y="210" width="12" height="12" fill="#fdfdfd"/><rect x="374" y="210" width="12" height="12" fill="#f6f6f7"/><rect x="386" y="210" width="12" height="12" fill="#f5f5f6"/><rect x="398" y="210" width="12" height="12" fill="#f7f7f7"/><rect x="410" y="210" width="12" height="12" fill="#f4f4f5"/><rect x="422" y="210" width="12" height="12" fill="#f9f9f9"/><rect x="434" y="210" width="12" height="12" fill="#f6f6f6"/><rect x="446" y="210" width="12" height="12" fill="#fcfcfc"/><rect x="362" y="222" width="12" height="12" fill="#f3f3f4"/><rect x="374" y="222" width="12" height="12" fill="#dfe0e2"/><rect x="386" y="222" width="12" height="12" fill="#d8d9dc"/><rect x="398" y="222" width="12" height="12" fill="#d6d7da"/><rect x="410" y="222" width="12" height="12" fill="#dfe0e2"/><rect x="422" y="222" width="12" height="12" fill="#dcdcdf"/><rect x="434" y="222" width="12" height="12" fill="#e7e7e9"/><rect x="446" y="222" width="12" height="12" fill="#f2f2f3"/><rect x="362" y="258" width="12" height="12" fill="#f2f3f3"/><rect x="374" y="258" width="12" height="12" fill="#d6d6d9"/><rect x="386" y="258" width="12" height="12" fill="#d9d9dc"/><rect x="398" y="258" width="12" height="12" fill="#e3e3e5"/><rect x="410" y="258" width="12" height="12" fill="#e1e1e3"/><rect x="422" y="258" width="12" height="12" fill="#dcdcdf"/><rect x="434" y="258" width="12" height="12" fill="#e7e8e9"/><rect x="446" y="258" width="12" height="12" fill="#f4f4f5"/><rect x="362" y="270" width="12" height="12" fill="#fdfdfd"/><rect x="374" y="270" width="12" height="12" fill="#fafafb"/><rect x="386" y="270" width="12" height="12" fill="#fbfbfb"/><rect x="398" y="270" width="12" height="12" fill="#f5f5f6"/><rect x="410" y="270" width="12" height="12" fill="#fafafa"/><rect x="422" y="270" width="12" height="12" fill="#f9f9fa"/><rect x="434" y="270" width="12" height="12" fill="#f8f8f9"/><rect x="446" y="270" width="12" height="12" fill="#fbfbfb"/><rect x="362" y="294" width="12" height="12" fill="#f9f9fa"/><rect x="374" y="294" width="12" height="12" fill="#ececee"/><rect x="386" y="294" width="12" height="12" fill="#ebebed"/><rect x="398" y="294" width="12" height="12" fill="#e8e8ea"/><rect x="410" y="294" width="12" height="12" fill="#e8e9ea"/><rect x="422" y="294" width="12" height="12" fill="#e8e8ea"/><rect x="434" y="294" width="12" height="12" fill="#eeeeef"/><rect x="446" y="294" width="12" height="12" fill="#f8f8f9"/><rect x="362" y="306" width="12" height="12" fill="#f8f8f9"/><rect x="374" y="306" width="12" height="12" fill="#e8e8ea"/><rect x="386" y="306" width="12" height="12" fill="#e7e7e9"/><rect x="398" y="306" width="12" height="12" fill="#efeff0"/><rect x="410" y="306" width="12" height="12" fill="#efeff0"/><rect x="422" y="306" width="12" height="12" fill="#eeeeef"/><rect x="434" y="306" width="12" height="12" fill="#eeeeef"/><rect x="446" y="306" width="12" height="12" fill="#f8f8f8"/><rect x="362" y="330" width="12" height="12" fill="#fcfcfc"/><rect x="374" y="330" width="12" height="12" fill="#f9f9f9"/><rect x="386" y="330" width="12" height="12" fill="#fbfbfb"/><rect x="398" y="330" width="12" height="12" fill="#f8f8f8"/><rect x="410" y="330" width="12" height="12" fill="#f8f8f9"/><rect x="422" y="330" width="12" height="12" fill="#f7f7f7"/><rect x="434" y="330" width="12" height="12" fill="#f3f4f4"/><rect x="446" y="330" width="12" height="12" fill="#fbfbfc"/><rect x="362" y="342" width="12" height="12" fill="#f3f3f4"/><rect x="374" y="342" width="12" height="12" fill="#dcdddf"/><rect x="386" y="342" width="12" height="12" fill="#dbdcde"/><rect x="398" y="342" width="12" height="12" fill="#e7e7e9"/><rect x="410" y="342" width="12" height="12" fill="#d7d8db"/><rect x="422" y="342" width="12" height="12" fill="#d9dadd"/><rect x="434" y="342" width="12" height="12" fill="#d8d8db"/><rect x="446" y="342" width="12" height="12" fill="#f1f2f3"/><rect x="89" y="378" width="69" height="4" fill="#fcecda"/><rect x="362" y="6" width="12" height="12" fill="#f8f8f8"/><rect x="374" y="6" width="12" height="12" fill="#f4f5f4"/><rect x="386" y="6" width="12" height="12" fill="#f9f9f9"/><rect x="398" y="6" width="12" height="12" fill="#f3f5f3"/><rect x="410" y="6" width="12" height="12" fill="#f5f5f4"/><rect x="362" y="18" width="12" height="12" fill="#e6e4e3"/><rect x="374" y="18" width="12" height="12" fill="#c9cbd0"/><rect x="386" y="18" width="12" height="12" fill="#cfd0d3"/><rect x="398" y="18" width="12" height="12" fill="#cdced2"/><rect x="410" y="18" width="12" height="12" fill="#c3c4c8"/></svg><!--M1--><div id="ft"><span style="left:24px">总账户余额:72230.48</span><span style="left:203px">总赠送账户:0.00</span><span style="left:352px">总积分账户:50170.52</span><span style="left:531px">总售卡工本费:0.00</span><span style="left:694px">总累计积分:50170.52</span><span style="left:873px">总累计消费:569.52</span><i class="hs"></i></div></div>
  <div class="pg" style="left:1278px;width:50px">共 8 条</div>
  <div class="pgsel"><span>10条/页</span><svg viewBox="0 0 12 8"><path d="M1 1.2 L6 6.4 L11 1.2"/></svg></div>
  <div class="pgb" style="left:1447px"><svg viewBox="0 0 10 12"><path d="M6.8 1.8 L2.8 6 L6.8 10.2"/></svg></div>
  <div class="pgb on" style="left:1479px">1</div>
  <div class="pgb" style="left:1511px"><svg viewBox="0 0 10 12"><path d="M3.2 1.8 L7.2 6 L3.2 10.2"/></svg></div>
  <div class="pg" style="left:1551px;width:30px">前往</div>
  <div class="pgin">1</div>
  <div class="pg" style="left:1647px;width:20px">页</div>
  <!--C1-->
</div>
</body>
</html>
